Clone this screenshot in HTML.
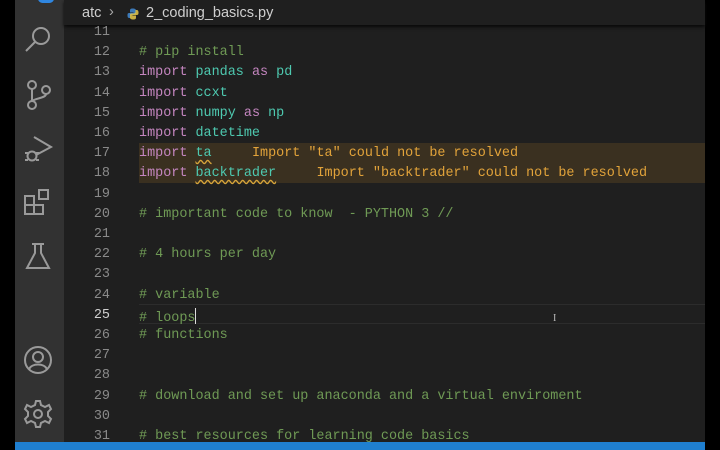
<!DOCTYPE html>
<html><head><meta charset="utf-8"><style>
*{margin:0;padding:0;box-sizing:border-box}
body{width:720px;height:450px;background:#000;position:relative;overflow:hidden;font-family:"Liberation Mono",monospace}
#act{position:absolute;left:15px;top:0;width:49px;height:442px;background:#323232}
#ed{position:absolute;left:64px;top:0;width:641px;height:442px;background:#1f1f1f}
#bc{position:absolute;left:64px;top:0;width:641px;height:25px;background:#1f1f1f;box-shadow:0 2px 3px #0a0a0a;font-family:"Liberation Sans",sans-serif;font-size:14.5px;color:#cfcfcf}
#status{position:absolute;left:15px;top:442px;width:690px;height:8px;background:#1f7fd0}
.ln{position:absolute;left:64px;width:46px;text-align:right;font-size:13.45px;color:#8a8a8a;margin-top:3px}
.code{position:absolute;left:139px;font-size:13.45px;white-space:pre;color:#d4d4d4;margin-top:3px}
.c{color:#6f9a55}.k{color:#c586c0}.m{color:#4ec9b0}.e{color:#e2a33a}
.sq{text-decoration:underline wavy #d6a43a;text-underline-offset:3px}
.hl{position:absolute;left:139px;width:566px;height:20px;background:#3a3020}
svg{position:absolute}
</style></head><body>
<div id="act"></div>
<div style="position:absolute;left:38px;top:-6px;width:16px;height:9px;border-radius:5px;background:#2f86e0"></div>
<svg style="left:22px;top:24px" width="32" height="32" viewBox="0 0 32 32" fill="none" stroke="#9a9a9a" stroke-width="2"><circle cx="19" cy="12" r="8"/><path d="M13 18 L4 27"/></svg>
<svg style="left:22px;top:78px" width="32" height="34" viewBox="0 0 32 34" fill="none" stroke="#9a9a9a" stroke-width="2"><circle cx="10" cy="7" r="4"/><circle cx="10" cy="27" r="4"/><circle cx="24" cy="12" r="4"/><path d="M10 11 V23 M24 16 C24 20 14 20 10 23"/></svg>
<svg style="left:22px;top:133px" width="32" height="32" viewBox="0 0 32 32" fill="none" stroke="#9a9a9a" stroke-width="2"><path d="M12 4 L29 14 L14 22"/><circle cx="10" cy="23" r="4.5"/><path d="M3 20 H6 M3 27 H6 M14 20 H17 M14 27 H17"/></svg>
<svg style="left:22px;top:187px" width="32" height="32" viewBox="0 0 32 32" fill="none" stroke="#9a9a9a" stroke-width="2"><rect x="3" y="9" width="9" height="9"/><rect x="3" y="18" width="9" height="9"/><rect x="12" y="18" width="9" height="9"/><rect x="17" y="3" width="9" height="9"/></svg>
<svg style="left:22px;top:240px" width="32" height="32" viewBox="0 0 32 32" fill="none" stroke="#9a9a9a" stroke-width="2"><path d="M10 4 H22 M13 4 V13 L5 28 H27 L19 13 V4"/></svg>
<svg style="left:22px;top:344px" width="32" height="32" viewBox="0 0 32 32" fill="none" stroke="#9a9a9a" stroke-width="2"><circle cx="16" cy="16" r="13"/><circle cx="16" cy="13" r="5"/><path d="M7 25 C10 19 22 19 25 25"/></svg>
<svg style="left:22px;top:398px" width="32" height="32" viewBox="0 0 32 32" fill="none" stroke="#9a9a9a" stroke-width="2"><circle cx="16" cy="16" r="4"/><path d="M14 3 H18 L19 7 L23 9 L27 7 L29 11 L26 14 V18 L29 21 L27 25 L23 23 L19 25 L18 29 H14 L13 25 L9 23 L5 25 L3 21 L6 18 V14 L3 11 L5 7 L9 9 L13 7 Z"/></svg>
<div id="ed"></div>
<div id="bc"><span style="position:absolute;left:18px;top:5px">atc</span><span style="position:absolute;left:45px;top:4px;color:#aaa">&#x203A;</span>
<svg style="left:63px;top:8px" width="12" height="12" viewBox="0 0 12 12"><path d="M6 0.5 C3 0.5 3 1.5 3 3 V4.5 H6.5 V5 H2 C0.5 5 0.5 6.5 0.5 7.5 C0.5 9 1 10 2.5 10 H3.5 V8 C3.5 7 4.5 6.5 5.5 6.5 H8 C9 6.5 9 5.5 9 5 V2.5 C9 1 7.5 0.5 6 0.5Z" fill="#3d7ab8"/><path d="M6 11.5 C9 11.5 9 10.5 9 9 V7.5 H5.5 V7 H10 C11.5 7 11.5 5.5 11.5 4.5 C11.5 3 11 2 9.5 2 H8.5 V4 C8.5 5 7.5 5.5 6.5 5.5 H4 C3 5.5 3 6.5 3 7 V9.5 C3 11 4.5 11.5 6 11.5Z" fill="#e8c94a" opacity=".85"/></svg>
<span style="position:absolute;left:82px;top:5px">2_coding_basics.py</span></div>
<div class="hl" style="top:143px"></div>
<div class="hl" style="top:163px"></div>
<div style="position:absolute;left:139px;top:304px;width:566px;height:20px;border-top:1px solid #2c2c2c;border-bottom:1px solid #2c2c2c"></div>

<div class="ln" style="top:22px">11</div>
<div class="ln" style="top:42px">12</div><div class="code c" style="top:42px"># pip install</div>
<div class="ln" style="top:62px">13</div><div class="code" style="top:62px"><span class="k">import</span> <span class="m">pandas</span> <span class="k">as</span> <span class="m">pd</span></div>
<div class="ln" style="top:83px">14</div><div class="code" style="top:83px"><span class="k">import</span> <span class="m">ccxt</span></div>
<div class="ln" style="top:103px">15</div><div class="code" style="top:103px"><span class="k">import</span> <span class="m">numpy</span> <span class="k">as</span> <span class="m">np</span></div>
<div class="ln" style="top:123px">16</div><div class="code" style="top:123px"><span class="k">import</span> <span class="m">datetime</span></div>
<div class="ln" style="top:143px">17</div><div class="code" style="top:143px"><span class="k">import</span> <span class="m sq">ta</span>     <span class="e">Import "ta" could not be resolved</span></div>
<div class="ln" style="top:163px">18</div><div class="code" style="top:163px"><span class="k">import</span> <span class="m sq">backtrader</span>     <span class="e">Import "backtrader" could not be resolved</span></div>
<div class="ln" style="top:184px">19</div>
<div class="ln" style="top:204px">20</div><div class="code c" style="top:204px"># important code to know  - PYTHON 3 //</div>
<div class="ln" style="top:224px">21</div>
<div class="ln" style="top:244px">22</div><div class="code c" style="top:244px"># 4 hours per day</div>
<div class="ln" style="top:264px">23</div>
<div class="ln" style="top:285px">24</div><div class="code c" style="top:285px"># variable</div>
<div class="ln" style="top:305px;color:#d0d0d0">25</div><div class="code c" style="top:305px"># loops<span style="display:inline-block;width:1px;height:16px;background:#ddd;vertical-align:-3px"></span></div>
<div class="ln" style="top:325px">26</div><div class="code c" style="top:325px"># functions</div>
<div class="ln" style="top:345px">27</div>
<div class="ln" style="top:365px">28</div>
<div class="ln" style="top:386px">29</div><div class="code c" style="top:386px"># download and set up anaconda and a virtual enviroment</div>
<div class="ln" style="top:406px">30</div>
<div class="ln" style="top:426px">31</div><div class="code c" style="top:426px"># best resources for learning code basics</div>
<div style="position:absolute;left:553px;top:313px;font-size:10px;color:#bbb;font-family:'Liberation Serif',serif">I</div>
<div id="status"></div>
</body></html>
